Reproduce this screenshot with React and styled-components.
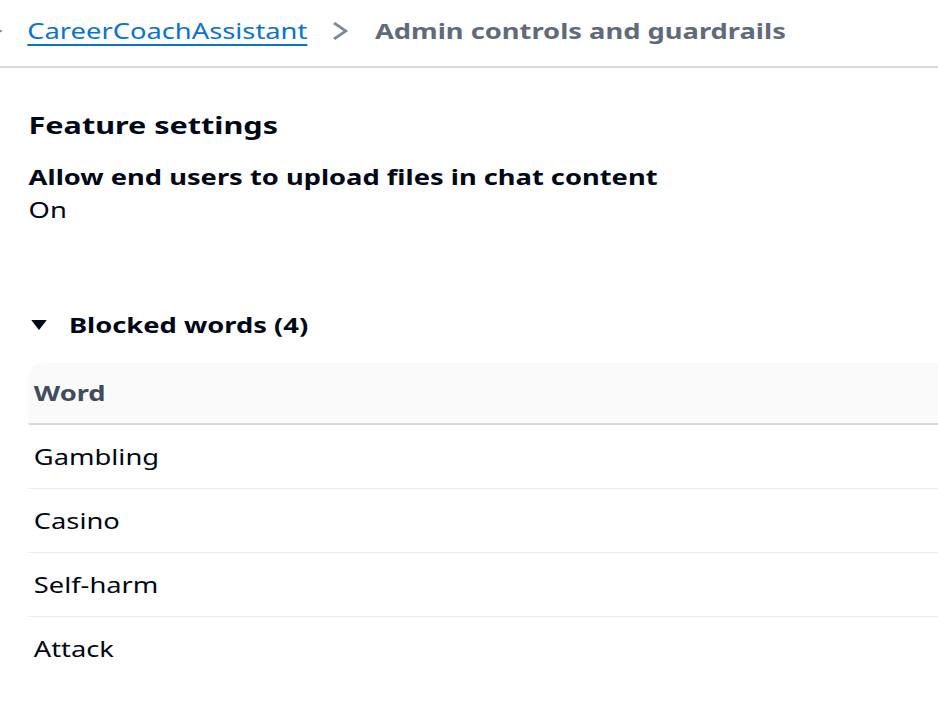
import React from 'react'
import styled, { createGlobalStyle } from 'styled-components'

const GlobalStyle = createGlobalStyle`
  html, body {
    margin: 0;
    padding: 0;
    background: #ffffff;
  }
  body {
    font-family: 'Noto Sans', 'Open Sans', sans-serif;
    color: #000716;
    overflow: hidden;
  }
`

// the capture is stretched wider than it is tall, so the page is laid out
// at 722px and widened to fill the 938px window
const Page = styled.div`
  width: 722px;
  height: 724px;
  overflow: hidden;
  transform: scaleX(1.3);
  transform-origin: 0 0;
`

const Breadcrumbs = styled.nav`
  height: 68px;
  display: flex;
  align-items: center;
  border-bottom: 2px solid #d5dbdb;
  padding-bottom: 5px;
  box-sizing: border-box;
  white-space: nowrap;
`

const PrevChevron = styled.svg`
  margin-left: -11px;
  margin-right: 19px;
  flex: none;
`

const Crumb = styled.a`
  font-size: 21px;
  color: #0972d3;
  text-decoration: underline;
  text-underline-offset: 5px;
  text-decoration-thickness: 2px;
`

const Chevron = styled.svg`
  margin: 0 20px 0 19px;
  flex: none;
`

const Current = styled.span`
  font-size: 21px;
  font-weight: 700;
  color: #5f6b7a;
`

const Content = styled.main`
  padding: 40px 0 0 22px;
`

const Heading = styled.h2`
  margin: 0;
  font-size: 23.5px;
  line-height: 34px;
  font-weight: 700;
`

const Field = styled.div`
  margin-top: 18px;
`

const Label = styled.div`
  font-size: 21px;
  font-weight: 700;
  line-height: 34px;
`

const Value = styled.div`
  font-size: 21px;
  line-height: 32px;
`

const Expander = styled.div`
  margin-top: 83px;
  display: flex;
  align-items: center;
  gap: 17px;
  padding-left: 2px;
  font-size: 21px;
  font-weight: 700;
  line-height: 32px;
`

const Table = styled.table`
  margin-top: 22px;
  width: calc(100% + 40px);
  border-collapse: collapse;
`

const HeadCell = styled.th`
  height: 60px;
  padding: 0 4px;
  text-align: left;
  font-size: 21px;
  font-weight: 700;
  color: #414d5c;
  background: #fafafa;
  border-bottom: 2px solid #d5dbdb;
  border-top-left-radius: 12px;
`

const Cell = styled.td`
  height: 63px;
  padding: 0 4px;
  font-size: 21px;
  border-bottom: ${p => (p.$last ? 'none' : '1px solid #e9ebed')};
`

const words = ['Gambling', 'Casino', 'Self-harm', 'Attack']

export default function App() {
  return (
    <Page>
      <GlobalStyle />
      <Breadcrumbs>
        <PrevChevron width="13" height="20" viewBox="0 0 13 20">
          <path d="M2 3 L11 10 L2 17" fill="none" stroke="#7d8998" strokeWidth="2.5" />
        </PrevChevron>
        <Crumb href="#">CareerCoachAssistant</Crumb>
        <Chevron width="13" height="20" viewBox="0 0 13 20">
          <path d="M2 2 L11 10 L2 18" fill="none" stroke="#7d8998" strokeWidth="2.5" />
        </Chevron>
        <Current>Admin controls and guardrails</Current>
      </Breadcrumbs>
      <Content>
        <Heading>Feature settings</Heading>
        <Field>
          <Label>Allow end users to upload files in chat content</Label>
          <Value>On</Value>
        </Field>
        <Expander>
          <svg width="12" height="11" viewBox="0 0 12 11">
            <path d="M0 0 H12 L6 10 Z" fill="#000716" />
          </svg>
          Blocked words (4)
        </Expander>
        <Table>
          <thead>
            <tr>
              <HeadCell>Word</HeadCell>
            </tr>
          </thead>
          <tbody>
            {words.map((w, i) => (
              <tr key={w}>
                <Cell $last={i === words.length - 1}>{w}</Cell>
              </tr>
            ))}
          </tbody>
        </Table>
      </Content>
    </Page>
  )
}
